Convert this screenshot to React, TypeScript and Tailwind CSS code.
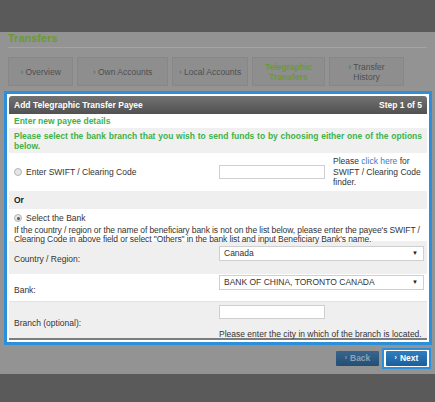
import React from "react";

const tabs = [
  { label: "Overview", w: "w-[65px]" },
  { label: "Own Accounts", w: "w-[91px]" },
  { label: "Local Accounts", w: "w-[76px]" },
  { label: "Telegraphic Transfers", w: "w-[73px]", active: true },
  { label: "Transfer History", w: "w-[75px]" },
];

function Radio({ checked = false }: { checked?: boolean }) {
  return (
    <span className="flex h-[8px] w-[8px] shrink-0 items-center justify-center rounded-full border border-[#b5b5b5] bg-[#e6e6e6]">
      {checked && <span className="h-[3px] w-[3px] rounded-full bg-[#555]" />}
    </span>
  );
}

function SelectBox({ value }: { value: string }) {
  return (
    <div className="flex h-[15px] w-[205px] items-center justify-between border border-[#cfcfcf] bg-white pl-[4px] pr-[5px] text-[8.5px] text-[#333]">
      <span>{value}</span>
      <span className="text-[6px] text-[#222]">▼</span>
    </div>
  );
}

export default function App() {
  return (
    <div className="flex h-[402px] w-[435px] flex-col overflow-hidden bg-[#5a5a5a] font-['Liberation_Sans',Arial,sans-serif]">
      <div className="h-[32px] shrink-0" />

      {/* dimmed page */}
      <div className="flex h-[342px] shrink-0 flex-col bg-[#939393]">
        <div className="mx-[8px] h-[16px] border-b border-[#a3a3a3] text-[11px] font-bold leading-[12px] text-[#6b9a35]">
          Transfers
        </div>

        <div className="ml-[8px] mt-[9px] flex h-[29px] gap-[4px]">
          {tabs.map((t) => (
            <div
              key={t.label}
              className={`${t.w} flex items-center justify-center border border-[#878787] bg-[#8e8e8e] px-[4px] text-center text-[8.5px] leading-[10px] ${
                t.active ? "font-bold text-[#6b9a35]" : "text-[#4e4e4e]"
              }`}
            >
              <span className={t.label === "Transfer History" || t.active ? "" : "whitespace-nowrap"}>
                {!t.active && <span className="text-[#3f6b8e]">› </span>}
                {t.label}
              </span>
            </div>
          ))}
        </div>

        {/* highlighted form */}
        <div className="ml-[4px] mt-[5px] w-[428px] border-[3px] border-[#2b8fda] bg-white p-[2px]">
          <div className="flex h-[18px] items-center justify-between rounded-t-[3px] bg-gradient-to-b from-[#727272] to-[#515151] px-[5px] text-[8.5px] font-bold text-white">
            <span>Add Telegraphic Transfer Payee</span>
            <span>Step 1 of 5</span>
          </div>

          <div className="flex h-[14px] items-center px-[5px] text-[8.5px] font-bold text-[#3db24a]">
            Enter new payee details
          </div>

          <div className="h-[25px] bg-[#f0f0f0] px-[5px] pt-[4px] text-justify text-[8.5px] font-bold leading-[9.5px] text-[#3db24a] [text-align-last:left]">
            Please select the bank branch that you wish to send funds to by choosing either one of the options below.
          </div>

          <div className="flex h-[38px] items-center">
            <div className="flex w-[210px] items-center gap-[4px] pl-[5px] text-[8.5px] text-[#333]">
              <Radio />
              <span>Enter SWIFT / Clearing Code</span>
            </div>
            <div className="w-[114px]">
              <div className="h-[14px] w-[106px] border border-[#cfcfcf] bg-white" />
            </div>
            <div className="w-[90px] text-[8.5px] leading-[10.5px] text-[#333]">
              Please <span className="text-[#3a7cc4]">click here</span> for SWIFT / Clearing Code finder.
            </div>
          </div>

          <div className="flex h-[18px] items-center bg-[#efefef] px-[5px] text-[8.5px] font-bold text-[#222]">
            Or
          </div>

          <div className="h-[32px] px-[5px] pt-[3px] text-[8.5px] text-[#333]">
            <div className="flex items-center gap-[4px]">
              <Radio checked />
              <span>Select the Bank</span>
            </div>
            <div className="mt-[1px] leading-[9.5px] tracking-[-0.1px]">
              If the country / region or the name of beneficiary bank is not on the list below, please enter the payee's SWIFT / Clearing Code in above field or select "Others" in the bank list and input Beneficiary Bank's name.
            </div>
          </div>

          <div className="flex h-[33px] bg-[#efefef] text-[8.5px] text-[#333]">
            <div className="w-[210px] pl-[5px] pt-[12px]">Country / Region:</div>
            <div className="pt-[5px]">
              <SelectBox value="Canada" />
            </div>
          </div>

          <div className="flex h-[28px] border-b border-[#e3e3e3] text-[8.5px] text-[#333]">
            <div className="w-[210px] pl-[5px] pt-[10px]">Bank:</div>
            <div className="pt-[1px]">
              <SelectBox value="BANK OF CHINA, TORONTO CANADA" />
            </div>
          </div>

          <div className="flex h-[38px] border-b-2 border-[#7d7d7d] bg-[#efefef] text-[8.5px] text-[#333]">
            <div className="w-[210px] pl-[5px] pt-[15px]">Branch (optional):</div>
            <div className="pt-[3px]">
              <div className="h-[14px] w-[106px] border border-[#cfcfcf] bg-white" />
              <div className="mt-[9px]">Please enter the city in which of the branch is located.</div>
            </div>
          </div>
        </div>

        <div className="mr-[4px] mt-[3px] flex items-center justify-end gap-[3px]">
          <div className="flex h-[15px] w-[43px] items-center justify-center rounded-[1px] bg-gradient-to-b from-[#39658c] to-[#244e74] text-[8.5px] font-bold text-[#8ba3b8]">
            <span className="mr-[3px] text-[7px]">›</span>Back
          </div>
          <div className="border-2 border-[#2b8fda] bg-white px-[2px] py-[1px]">
            <div className="flex h-[15px] w-[41px] items-center justify-center rounded-[1px] bg-gradient-to-b from-[#2f7fc0] to-[#1b5f9c] text-[8.5px] font-bold text-white">
              <span className="mr-[3px] text-[7px]">›</span>Next
            </div>
          </div>
        </div>
      </div>
    </div>
  );
}
